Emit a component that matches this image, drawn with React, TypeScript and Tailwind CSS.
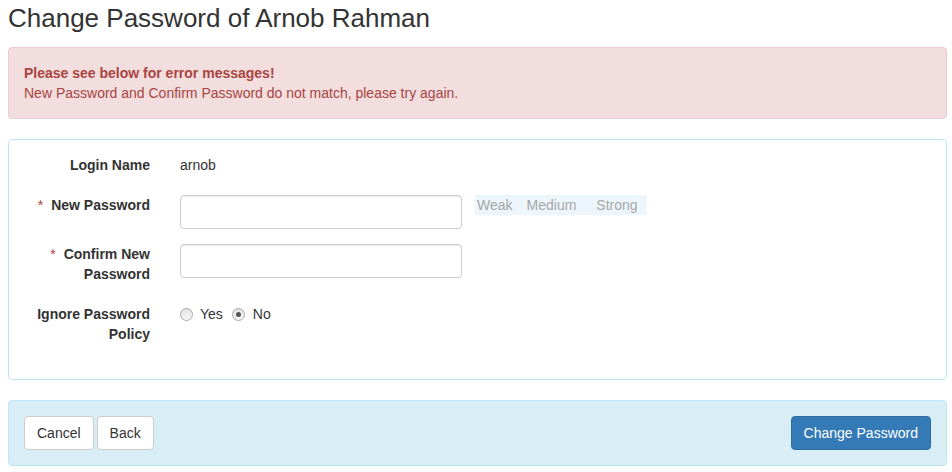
import React from "react";

function Radio({ checked }: { checked?: boolean }) {
  return (
    <span className="relative inline-flex h-[13px] w-[13px] items-center justify-center rounded-full border border-[#a8a8a8] bg-gradient-to-b from-[#e2e2e2] to-[#f8f8f8]">
      {checked && <span className="h-[5px] w-[5px] rounded-full bg-[#555]" />}
    </span>
  );
}

function Label({ children, required }: { children: React.ReactNode; required?: boolean }) {
  return (
    <div className="w-[141px] shrink-0 pr-[15px] text-right font-bold">
      {required && <span className="mr-[8px] font-normal text-[#a94442]">*</span>}
      {children}
    </div>
  );
}

export default function App() {
  return (
    <div className="min-h-[472px] bg-white pl-[8px] pr-[5px] pt-[4px] font-['Liberation_Sans',Arial,sans-serif] text-[14px] leading-[20px] text-[#333]">
      <h1 className="text-[26px] font-normal leading-[28px]">Change Password of Arnob Rahman</h1>

      <div className="mt-[15px] rounded-[4px] border border-[#ebccd1] bg-[#f2dede] p-[15px] text-[#a94442]">
        <div className="font-bold">Please see below for error messages!</div>
        <div>New Password and Confirm Password do not match, please try again.</div>
      </div>

      <div className="mt-[20px] rounded-[4px] border border-[#bce8f1] bg-white px-[15px] pb-[35px] pt-[15px]">
        <div className="mb-[20px] flex h-[20px]">
          <Label>Login Name</Label>
          <div className="ml-[15px]">arnob</div>
        </div>

        <div className="mb-[15px] flex">
          <Label required>New Password</Label>
          <input
            type="password"
            className="ml-[15px] h-[34px] w-[282px] rounded-[4px] border border-[#ccc] bg-white px-[12px] shadow-[inset_0_1px_1px_rgba(0,0,0,0.075)] outline-none"
          />
          <div className="ml-[13px] flex h-[20px] w-[172px] bg-[#eef6fd] text-[#a6a6a6]">
            <span className="ml-[2px]">Weak</span>
            <span className="ml-[14px]">Medium</span>
            <span className="ml-[20px]">Strong</span>
          </div>
        </div>

        <div className="mb-[20px] flex">
          <Label required>Confirm New Password</Label>
          <input
            type="password"
            className="ml-[15px] h-[34px] w-[282px] rounded-[4px] border border-[#ccc] bg-white px-[12px] shadow-[inset_0_1px_1px_rgba(0,0,0,0.075)] outline-none"
          />
        </div>

        <div className="flex">
          <Label>Ignore Password Policy</Label>
          <div className="ml-[15px] flex h-[20px] items-center">
            <Radio />
            <span className="ml-[7px]">Yes</span>
            <span className="ml-[9px] flex items-center">
              <Radio checked />
            </span>
            <span className="ml-[8px]">No</span>
          </div>
        </div>
      </div>

      <div className="mt-[20px] flex items-center justify-between rounded-[4px] border border-[#bce8f1] bg-[#d9edf7] px-[15px] py-[15px]">
        <div className="flex gap-[3px]">
          <button className="h-[34px] rounded-[4px] border border-[#ccc] bg-white px-[12px] text-[14px] leading-[20px] text-[#333]">
            Cancel
          </button>
          <button className="h-[34px] rounded-[4px] border border-[#ccc] bg-white px-[12px] text-[14px] leading-[20px] text-[#333]">
            Back
          </button>
        </div>
        <button className="h-[34px] rounded-[4px] border border-[#2e6da4] bg-[#337ab7] px-[12px] text-[14px] leading-[20px] text-white">
          Change Password
        </button>
      </div>
    </div>
  );
}
